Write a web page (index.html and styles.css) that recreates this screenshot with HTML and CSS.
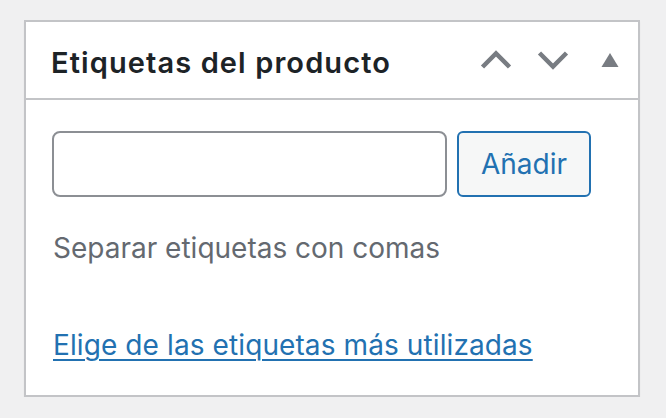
FILE: index.html
```html
<!DOCTYPE html>
<html lang="es">
<head>
<meta charset="utf-8">
<title>Etiquetas del producto</title>
<link rel="stylesheet" href="styles.css">
</head>
<body>
<div class="postbox">
  <div class="postbox-header">
    <h2 class="hndle">Etiquetas del producto</h2>
    <div class="handle-actions">
      <button class="handle-btn" aria-label="Subir">
        <svg width="32" height="20" viewBox="0 0 32 20"><polyline points="2.5,17 16,3.5 29.5,17" fill="none" stroke="#787c82" stroke-width="4.5"/></svg>
      </button>
      <button class="handle-btn" aria-label="Bajar">
        <svg width="32" height="20" viewBox="0 0 32 20"><polyline points="2.5,3 16,16.5 29.5,3" fill="none" stroke="#787c82" stroke-width="4.5"/></svg>
      </button>
      <button class="handle-btn" aria-label="Plegar">
        <svg width="18" height="14" viewBox="0 0 18 14"><polygon points="9,0 17.5,14 0.5,14" fill="#787c82"/></svg>
      </button>
    </div>
  </div>
  <div class="inside">
    <div class="tag-row">
      <input class="newtag" type="text" aria-label="Nueva etiqueta">
      <button class="tagadd">Añadir</button>
    </div>
    <p class="howto">Separar etiquetas con comas</p>
    <p class="cloud"><a href="#">Elige de las etiquetas más utilizadas</a></p>
  </div>
</div>
</body>
</html>
```
FILE: styles.css
```css
* { box-sizing: border-box; }
body {
  margin: 0;
  background: #f0f0f1;
  font-family: Inter, "Noto Sans", sans-serif;
  padding: 20px 26px 0 24px;
}
.postbox {
  width: 616px;
  background: #fff;
  border: 2px solid #c3c4c7;
  box-shadow: 0 2px 2px rgba(0,0,0,.04);
}
.postbox-header {
  display: flex;
  align-items: center;
  height: 78px;
  border-bottom: 2px solid #c3c4c7;
}
.hndle {
  flex: 1;
  margin: 0;
  padding: 5px 0 0 25px;
  font-size: 29px;
  font-weight: 600;
  color: #1d2327;
  letter-spacing: 1.1px;
}
.handle-actions { display: flex; align-items: center; }
.handle-btn {
  width: 57px;
  height: 76px;
  padding: 0;
  border: 0;
  background: none;
  display: flex;
  align-items: center;
  justify-content: center;
}
.inside { padding: 31px 26px 30px 26px; }
.tag-row { display: flex; gap: 10px; }
.newtag {
  width: 395px;
  height: 66px;
  border: 2px solid #8c8f94;
  border-radius: 8px;
  background: #fff;
}
.tagadd {
  width: 134px;
  height: 66px;
  padding: 0;
  border: 2px solid #2271b1;
  border-radius: 6px;
  background: #f6f7f7;
  color: #2271b1;
  font-family: inherit;
  font-size: 28px;
}
.howto {
  margin: 31px 0 0 1px;
  font-size: 28px;
  color: #646970;
  line-height: 40px;
}
.cloud {
  margin: 57px 0 0 1px;
  font-size: 28px;
  line-height: 40px;
  letter-spacing: 0.1px;
}
.cloud a { color: #2271b1; text-decoration: underline; text-underline-offset: 4px; text-decoration-thickness: 2px; }
```
